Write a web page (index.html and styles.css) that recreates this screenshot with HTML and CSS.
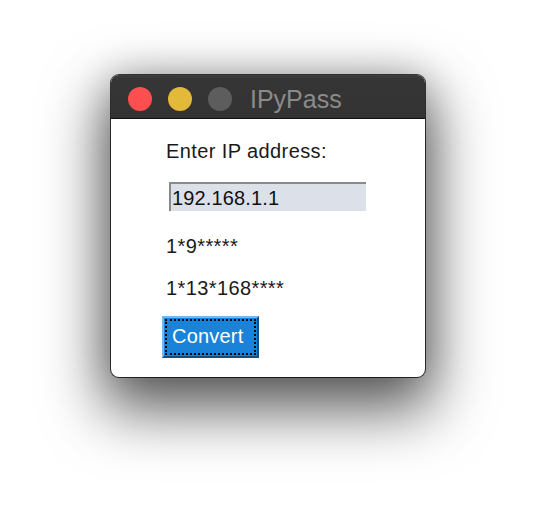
FILE: index.html
```html
<!DOCTYPE html>
<html>
<head>
<meta charset="utf-8">
<link rel="stylesheet" href="styles.css">
</head>
<body>
<div class="desk">
  <div class="window">
    <div class="titlebar">
      <span class="light red"></span>
      <span class="light yellow"></span>
      <span class="light grey"></span>
      <span class="title">IPyPass</span>
    </div>
    <div class="content">
      <div class="label">Enter IP address:</div>
      <div class="entry">192.168.1.1</div>
      <div class="label out1">1*9*****</div>
      <div class="label out2">1*13*168****</div>
      <div class="btn"><span class="btn-inner">Convert</span></div>
    </div>
  </div>
</div>
</body>
</html>
```
FILE: styles.css
```css
html, body {
  margin: 0;
  padding: 0;
  background: #ffffff;
  width: 536px;
  height: 524px;
  overflow: hidden;
}
.desk {
  padding: 75px 0 0 111px;
  font-family: "Liberation Sans", Arial, sans-serif;
}
.window {
  width: 314px;
  height: 302px;
  border-radius: 8px;
  overflow: hidden;
  background: #ffffff;
  box-shadow: 0 0 0 1px rgba(0,0,0,0.75), 0 26px 60px 8px rgba(0,0,0,0.62), 0 0 36px rgba(0,0,0,0.2);
  display: flex;
  flex-direction: column;
}
.titlebar {
  height: 44px;
  box-sizing: border-box;
  background: linear-gradient(#3e3e3e, #353535 4px, #333333);
  border-bottom: 1px solid #111;
  display: flex;
  align-items: flex-start;
  padding: 12px 0 0 17px;
  gap: 16px;
  flex: none;
}
.light {
  width: 24px;
  height: 24px;
  border-radius: 50%;
  flex: none;
}
.red { background: #fd4f4f; }
.yellow { background: #e3b93a; }
.grey { background: #5d5d5d; }
.title {
  margin-left: 2px;
  margin-top: -3px;
  font-size: 25px;
  line-height: 30px;
  color: #8b8b8b;
}
.content {
  flex: 1;
  display: flex;
  flex-direction: column;
  align-items: flex-start;
  padding: 20px 0 0 55px;
}
.label {
  font-size: 20px;
  line-height: 24px;
  letter-spacing: 0.4px;
  color: #1a1a1a;
}
.entry {
  margin-top: 19px;
  margin-left: 3px;
  width: 197px;
  box-sizing: border-box;
  border-top: 2px solid #8a8a8a;
  border-left: 2px solid #8a8a8a;
  background: #dce0e8;
  padding: 2px 0 1px 1px;
  font-size: 20px;
  line-height: 24px;
  letter-spacing: 0.15px;
  color: #111;
}
.out1 { margin-top: 23px; }
.out2 { margin-top: 18px; }
.btn {
  margin-top: 16px;
  margin-left: -4px;
  width: 97px;
  height: 42px;
  box-sizing: border-box;
  background: #1a83d8;
  border-top: 2px solid #78b7ee;
  border-left: 2px solid #78b7ee;
  border-right: 2px solid #124f82;
  border-bottom: 2px solid #124f82;
  padding: 1px;
}
.btn-inner {
  display: block;
  height: 100%;
  box-sizing: border-box;
  border: 2px dotted #000;
  padding: 3px 0 0 5px;
  font-size: 20px;
  line-height: 24px;
  letter-spacing: 0.2px;
  color: #ffffff;
}
```
